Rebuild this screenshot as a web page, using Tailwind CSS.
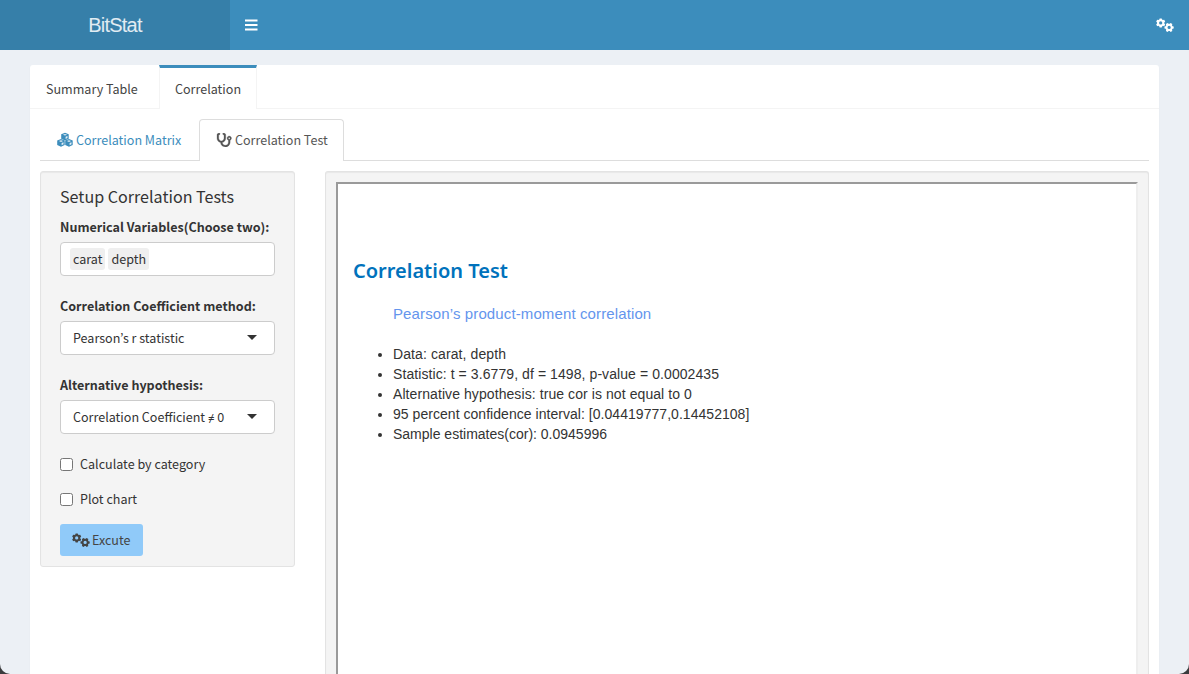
<!DOCTYPE html>
<html lang="en">
<head>
<meta charset="utf-8">
<title>BitStat</title>
<script src="https://cdn.jsdelivr.net/npm/@tailwindcss/browser@4"></script>
</head>
<body class="h-[674px] overflow-hidden bg-[#3b3b3d]">
<svg class="hidden">
  <defs>
    <g id="gear"><path fill-rule="evenodd" d="M3.400 0h2.200l.35 1.300 1 .55 1.300-.4L9.350 3.300l-.95 1v1.200l.95 1-1.100 1.900-1.300-.4-1 .6L5.600 9.900H3.400l-.35-1.300-1-.6-1.300.4L-.35 6.500l.95-1V4.300l-.95-1 1.100-1.850 1.300.4 1-.55zM4.500 3.150a1.750 1.750 0 1 0 0 3.500 1.750 1.750 0 0 0 0-3.500z"/></g>
    <symbol id="gears" viewBox="0 0 18 15"><use href="#gear" transform="translate(.5 .4) scale(.93)"/><use href="#gear" transform="translate(17.700 5.300) rotate(90) scale(.93)"/></symbol>
  </defs>
</svg>
<div class="flex h-[674px] flex-col overflow-hidden rounded-b-[10px] bg-[#ecf0f5] text-[#333] font-['Noto_Sans_CJK_JP',sans-serif] text-[12.55px] leading-5">
  <header class="flex h-[50px] shrink-0 bg-[#3c8dbc] text-white">
    <div class="flex w-[230px] items-center justify-center bg-[#367fa9] font-['Liberation_Sans',sans-serif] text-[20px] tracking-[-0.8px] text-white/85">BitStat</div>
    <div class="flex flex-1 items-center justify-between pr-[15px] pl-[15px]">
      <svg class="h-3 w-[13px]" viewBox="0 0 13 12" fill="currentColor"><path d="M0 .5h12.500v2H0zM0 5h12.500v2H0zM0 9.500h12.500v2H0z"/></svg>
      <svg class="h-[15px] w-[18px]" fill="currentColor"><use href="#gears"/></svg>
    </div>
  </header>
  <main class="mx-[30px] mt-[15px] flex flex-1 flex-col rounded-t-[3px] bg-white shadow-[0_1px_1px_rgba(0,0,0,0.1)]">
    <nav class="flex h-11 shrink-0 border-b border-[#f4f4f4] text-[#444]">
      <div class="flex w-[129px] items-center pt-[5px] pl-4">Summary Table</div>
      <div class="-mb-px flex w-[98px] items-center border-x border-t-3 border-x-[#f4f4f4] border-t-[#3c8dbc] bg-white pl-[15px]">Correlation</div>
    </nav>
    <div class="flex flex-1 flex-col px-[10px] pt-[10px]">
      <nav class="flex h-[42px] shrink-0 border-b border-[#ddd]">
        <div class="flex w-[159px] items-center gap-[3px] pl-[17px] text-[#3c8dbc]">
          <svg class="h-4 w-4" viewBox="0 0 16 16">
            <defs><g id="cube"><path d="M3.800 0L7.500 1.400v4.500L3.800 7.600 0 5.900V1.400z" fill="currentColor"/><path d="M1.700 2l2.100-.8 2.100.8-2.100.8zM4.400 4l1.900-.75v2L4.400 6.100z" fill="#fff" fill-opacity=".85"/></g></defs>
            <use href="#cube" x="4.200" y=".8"/><use href="#cube" x=".2" y="7.100"/><use href="#cube" x="8.200" y="7.100"/>
          </svg>
          <span>Correlation Matrix</span>
        </div>
        <div class="-mb-px flex w-[145px] items-center gap-[3px] rounded-t-[4px] border border-b-0 border-[#ddd] bg-white pb-[2px] pl-4 text-[#555]">
          <svg class="h-[14px] w-4" viewBox="0 0 576 512" fill="currentColor" stroke="currentColor" stroke-width="10"><path d="M142.400 21.900c5.600 16.800-3.500 34.900-20.200 40.500L96 71.100V192c0 53 43 96 96 96s96-43 96-96V71.100l-26.100-8.700c-16.800-5.600-25.800-23.700-20.200-40.500s23.700-25.800 40.500-20.200l26.100 8.700C334.400 19.100 352 43.500 352 71.100V192c0 77.200-54.600 141.600-127.300 156.700C231 404.600 278.400 448 336 448c61.900 0 112-50.100 112-112V265.300c-28.300-12.300-48-40.500-48-73.300c0-44.200 35.800-80 80-80s80 35.800 80 80c0 32.800-19.700 61-48 73.300V336c0 97.200-78.800 176-176 176c-92.900 0-168.900-71.900-175.500-163.100C87.200 334.200 32 269.600 32 192V71.100c0-27.500 17.600-52 43.800-60.700l26.100-8.700c16.800-5.600 34.900 3.500 40.500 20.200zM480 224a32 32 0 1 0 0-64 32 32 0 1 0 0 64z"/></svg>
          <span>Correlation Test</span>
        </div>
      </nav>
      <div class="mt-[10px] flex flex-1 items-start gap-[30px]">
        <section class="h-[396px] w-[255px] rounded-[3px] border border-[#e3e3e3] bg-[#f4f4f4] px-[19px] pt-[14px] shadow-[inset_0_1px_1px_rgba(0,0,0,0.05)]">
          <h4 class="text-[16.1px] leading-5">Setup Correlation Tests</h4>
          <div class="mt-[11px] font-bold">Numerical Variables(Choose two):</div>
          <div class="mt-[5px] flex h-[34px] items-center gap-[3px] rounded-[4px] border border-[#ccc] bg-white pl-[9px]">
            <span class="rounded-[3px] bg-[#efefef] px-[3px] py-px">carat</span>
            <span class="rounded-[3px] bg-[#efefef] px-[3px] py-px">depth</span>
          </div>
          <div class="mt-5 font-bold">Correlation Coefficient method:</div>
          <div class="mt-[5px] flex h-[34px] items-center justify-between rounded-[4px] border border-[#ccc] bg-white pr-[17px] pl-3">
            <span>Pearson’s r statistic</span>
            <svg class="mb-px h-[5px] w-[10px]" viewBox="0 0 10 5"><path d="M0 0h10L5 5z" fill="#333"/></svg>
          </div>
          <div class="mt-5 font-bold">Alternative hypothesis:</div>
          <div class="mt-[5px] flex h-[34px] items-center justify-between rounded-[4px] border border-[#ccc] bg-white pr-[17px] pl-3">
            <span>Correlation Coefficient <span class="font-['Noto_Sans',sans-serif] text-[11.5px] leading-none">≠</span> 0</span>
            <svg class="mb-px h-[5px] w-[10px]" viewBox="0 0 10 5"><path d="M0 0h10L5 5z" fill="#333"/></svg>
          </div>
          <label class="mt-5 flex items-center gap-[7px]"><span class="h-[13px] w-[13px] rounded-[2.5px] border border-[#767676] bg-white"></span>Calculate by category</label>
          <label class="mt-[15px] flex items-center gap-[7px]"><span class="h-[13px] w-[13px] rounded-[2.5px] border border-[#767676] bg-white"></span>Plot chart</label>
          <button class="mt-[15px] flex h-8 w-[83px] items-center gap-[2px] rounded-[3px] bg-[#90caf9] pl-3 text-[#444]">
            <svg class="h-[15px] w-[18px]" fill="currentColor"><use href="#gears"/></svg>Excute
          </button>
        </section>
        <section class="flex-1 self-stretch rounded-t-[3px] border border-b-0 border-[#e3e3e3] bg-[#f4f4f4] px-[10px] pt-[10px] shadow-[inset_0_1px_1px_rgba(0,0,0,0.05)]">
          <div class="h-full border-t-2 border-r-2 border-l-2 border-t-[#9a9a9a] border-r-[#eee] border-l-[#9a9a9a] bg-white px-[15px] pt-[75px] font-['Liberation_Sans',sans-serif] text-[14px]">
            <h2 class="font-['Noto_Sans',sans-serif] text-[20px] leading-6 font-semibold text-[#0072bc]">Correlation Test</h2>
            <p class="mt-[21px] pl-10 text-[15px] leading-5 tracking-[0.12px] text-[#6495ed]">Pearson’s product-moment correlation</p>
            <ul class="mt-5 list-disc pl-10">
              <li class="tracking-[0.1px]">Data: carat, depth</li>
              <li class="tracking-[0.08px]">Statistic: t = 3.6779, df = 1498, p-value = 0.0002435</li>
              <li class="tracking-[0.08px]">Alternative hypothesis: true cor is not equal to 0</li>
              <li class="tracking-[0.04px]">95 percent confidence interval: [0.04419777,0.14452108]</li>
              <li>Sample estimates(cor): 0.0945996</li>
            </ul>
          </div>
        </section>
      </div>
    </div>
  </main>
</div>
</body>
</html>
